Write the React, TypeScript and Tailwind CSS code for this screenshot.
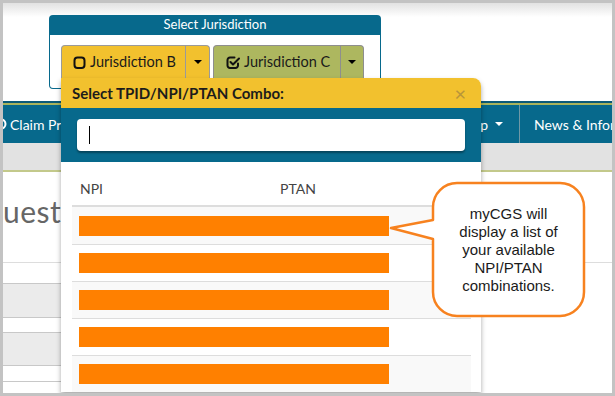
const rows = [0, 1, 2, 3, 4];

function SquareIcon() {
  return (
    <svg width="13" height="13" viewBox="0 0 13 13" fill="none" stroke="#111" strokeWidth="2">
      <rect x="1.5" y="1.5" width="10" height="10.5" rx="3" />
    </svg>
  );
}

function CheckSquareIcon() {
  return (
    <svg width="14" height="13" viewBox="0 0 14 13" fill="none" stroke="#111" strokeWidth="2" strokeLinecap="round" strokeLinejoin="round">
      <path d="M8.5 1.5H4A2.5 2.5 0 0 0 1.5 4v5.5A2.5 2.5 0 0 0 4 12h5.5A2.5 2.5 0 0 0 12 9.5V7.5" />
      <path d="M4.5 6l2.5 2.5L13 2.5" />
    </svg>
  );
}

export default function App() {
  return (
    <div className="relative w-[615px] h-[396px] overflow-hidden border-[3px] border-[#c3c3c3] bg-white font-[Lato,sans-serif]">
      {/* page behind the popover */}
      <div className="h-[98px] bg-[linear-gradient(to_bottom,#e2e2e2,#ffffff_14px)]" />
      <div className="h-[2px] bg-[#0b5a78]" />
      <div className="h-[2px] bg-[#a9b35c]" />
      <nav className="flex h-[38px] bg-[#07698c] text-[14px] text-white">
        <div className="-ml-[8px] flex min-w-0 flex-1 items-center gap-[3px]">
          <svg width="12" height="12" viewBox="0 0 12 12" fill="none" stroke="white" strokeWidth="2">
            <circle cx="6" cy="6" r="4.5" />
          </svg>
          <span className="whitespace-nowrap">Claim Processing</span>
        </div>
        <div className="flex items-center gap-[7px] whitespace-nowrap border-r border-[#6f98a6] pr-[16px]">
          Lookup
          <span className="h-0 w-0 border-x-[4px] border-t-[4px] border-x-transparent border-t-white" />
        </div>
        <div className="flex w-[92px] items-center overflow-hidden whitespace-nowrap pl-[14px]">
          News &amp; Information
        </div>
      </nav>
      <div className="h-[27px] bg-[#e2e2e2]" />
      <div className="h-[2px] bg-[#c3c98b]" />
      <div className="h-[90px] pt-[24px] text-[30px] leading-none tracking-[0.5px] text-[#666]">uest</div>
      <div className="border-t border-[#dddddd]">
        <div className="w-[460px]">
          <div className="h-[20px]" />
          <div className="h-[34px] border-t border-[#c8c8c8] bg-[#ebebeb]" />
          <div className="h-[15px] border-t border-[#c8c8c8]" />
          <div className="h-[33px] border-t border-[#c8c8c8] bg-[#ebebeb]" />
          <div className="h-[16px] border-t border-[#c8c8c8]" />
          <div className="h-[12px] border-t border-[#c8c8c8]" />
        </div>
      </div>

      {/* jurisdiction selector */}
      <div className="absolute left-[46px] top-[12px] w-[332px]">
        <div className="flex h-[20px] items-center justify-center rounded-t-[4px] bg-[#07698c] text-[13px] text-white">
          Select Jurisdiction
        </div>
        <div className="h-[54px] rounded-b-[4px] border border-t-0 border-[#07698c] bg-white pl-[11px] pt-[10px]">
          <div className="flex gap-[3px] text-[14.5px] text-[#1a1a1a]">
            <div className="flex h-[33px] rounded-t-[4px] border border-b-0 border-[#9a9a9a] bg-[#f2c12e]">
              <div className="flex w-[123px] items-center gap-[4px] pl-[11px]">
                <SquareIcon />
                <span>Jurisdiction B</span>
              </div>
              <div className="flex w-[24px] items-center justify-center border-l border-[#9a9a9a]">
                <span className="h-0 w-0 border-x-[4px] border-t-[4px] border-x-transparent border-t-black" />
              </div>
            </div>
            <div className="flex h-[33px] rounded-t-[4px] border border-b-0 border-[#8e8e8e] bg-[#adb75f]">
              <div className="flex w-[126px] items-center gap-[4px] pl-[12px]">
                <CheckSquareIcon />
                <span>Jurisdiction C</span>
              </div>
              <div className="flex w-[23px] items-center justify-center border-l border-[#8e8e8e]">
                <span className="h-0 w-0 border-x-[4px] border-t-[4px] border-x-transparent border-t-black" />
              </div>
            </div>
          </div>
        </div>
      </div>

      {/* combo popover */}
      <div className="absolute left-[58px] top-[75px] w-[420px] rounded-tr-[8px] bg-white shadow-[0_3px_5px_rgba(0,0,0,0.35)]">
        <div className="flex h-[30px] items-center justify-between rounded-tr-[8px] bg-[#f2c12e] pl-[11px] pr-[15px]">
          <span className="text-[15px] font-bold text-[#1c1c1c]">Select TPID/NPI/PTAN Combo:</span>
          <span className="text-[20px] leading-none text-[#b8953a]">×</span>
        </div>
        <div className="bg-[#07698c] px-[16px] py-[11px]">
          <div className="flex h-[32px] items-center rounded-[4px] bg-white pl-[12px] shadow-[0_2px_2px_rgba(0,0,0,0.35)]">
            <span className="h-[18px] w-px bg-black" />
          </div>
        </div>
        <div className="pl-[11px] pr-[10px] pt-[10px]">
          <div className="flex h-[35px] items-center border-b-2 border-[#dddddd] text-[14px] text-[#444]">
            <div className="w-[200px] pl-[8px]">NPI</div>
            <div className="pl-[8px]">PTAN</div>
          </div>
          {rows.map((i) => (
            <div
              key={i}
              className={
                i === 0
                  ? "bg-[#f9f9f9] pb-[8px] pl-[7px] pt-[9px]"
                  : i % 2 === 0
                  ? "border-t border-[#dddddd] bg-[#f9f9f9] pb-[8px] pl-[7px] pt-[8px]"
                  : "border-t border-[#dddddd] bg-white pb-[8px] pl-[7px] pt-[8px]"
              }
            >
              <div className="h-[20px] w-[310px] bg-[#ff8000]" />
            </div>
          ))}
        </div>
      </div>

      {/* callout */}
      <svg className="absolute left-[385px] top-[177px]" width="200" height="140" viewBox="0 0 200 140">
        <path
          d="M69 3H172A24 24 0 0 1 196 27V112A24 24 0 0 1 172 136H69A24 24 0 0 1 45 112V59L3 48L45 40V27A24 24 0 0 1 69 3Z"
          fill="white"
          stroke="#f7821f"
          strokeWidth="2.5"
          strokeLinejoin="round"
        />
      </svg>
      <div className="absolute left-[430px] top-[180px] flex h-[133px] w-[151px] items-center justify-center text-center font-['Liberation_Sans',Arial,sans-serif] text-[15px] leading-[18px] text-[#1a1a1a]">
        <p>
          myCGS will
          <br />
          display a list of
          <br />
          your available
          <br />
          NPI/PTAN
          <br />
          combinations.
        </p>
      </div>
    </div>
  );
}
